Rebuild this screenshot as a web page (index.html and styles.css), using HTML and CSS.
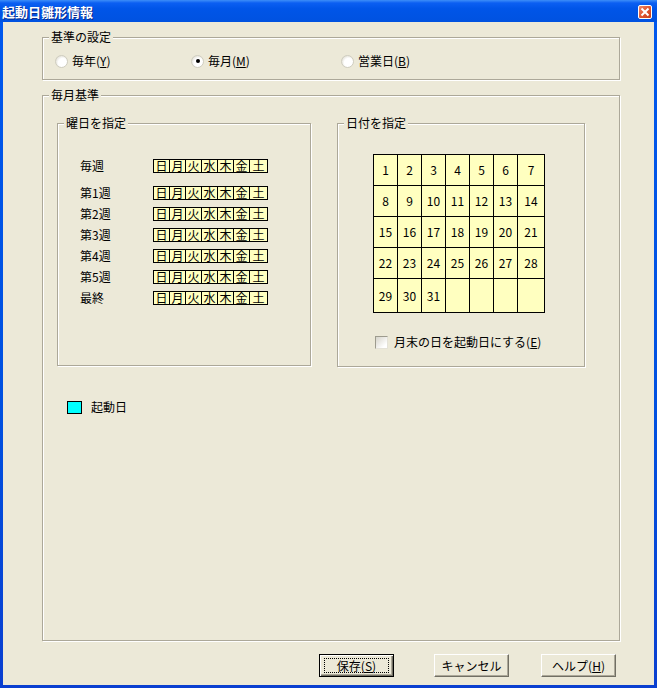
FILE: index.html
```html
<!DOCTYPE html>
<html lang='ja'>

<head>
    <meta charset='UTF-8'>
    <meta name='viewport' content='width=device-width, initial-scale=1.0'>
    <title>起動日雛形情報</title>
    <link rel="stylesheet" href="styles.css">
</head>

<body>
    <div class="window">
        <div class="titlebar">
            <span class="title">起動日雛形情報</span>
            <span class="close">
                <svg width="10" height="10" viewBox="0 0 10 10">
                    <path d="M1.5 1.5 L8.5 8.5 M8.5 1.5 L1.5 8.5" stroke="#fff" stroke-width="2" fill="none" />
                </svg>
            </span>
        </div>

        <div class="client">
            <!-- 基準の設定 -->
            <div class="group kijun">
                <span class="legend">基準の設定</span>
                <div class="radios">
                    <label class="radio r1"><span class="dot"></span><span>毎年(<u>Y</u>)</span></label>
                    <label class="radio r2"><span class="dot on"></span><span>毎月(<u>M</u>)</span></label>
                    <label class="radio"><span class="dot"></span><span>営業日(<u>B</u>)</span></label>
                </div>
            </div>

            <!-- 毎月基準 -->
            <div class="group maitsuki">
                <span class="legend">毎月基準</span>

                <div class="inner">
                    <div class="group youbi">
                        <span class="legend">曜日を指定</span>
                        <div class="week first">
                            <span class="wlabel">毎週</span>
                            <div class="days"><span>日</span><span>月</span><span>火</span><span>水</span><span>木</span><span>金</span><span>土</span></div>
                        </div>
                        <div class="week">
                            <span class="wlabel">第1週</span>
                            <div class="days"><span>日</span><span>月</span><span>火</span><span>水</span><span>木</span><span>金</span><span>土</span></div>
                        </div>
                        <div class="week">
                            <span class="wlabel">第2週</span>
                            <div class="days"><span>日</span><span>月</span><span>火</span><span>水</span><span>木</span><span>金</span><span>土</span></div>
                        </div>
                        <div class="week">
                            <span class="wlabel">第3週</span>
                            <div class="days"><span>日</span><span>月</span><span>火</span><span>水</span><span>木</span><span>金</span><span>土</span></div>
                        </div>
                        <div class="week">
                            <span class="wlabel">第4週</span>
                            <div class="days"><span>日</span><span>月</span><span>火</span><span>水</span><span>木</span><span>金</span><span>土</span></div>
                        </div>
                        <div class="week">
                            <span class="wlabel">第5週</span>
                            <div class="days"><span>日</span><span>月</span><span>火</span><span>水</span><span>木</span><span>金</span><span>土</span></div>
                        </div>
                        <div class="week">
                            <span class="wlabel">最終</span>
                            <div class="days"><span>日</span><span>月</span><span>火</span><span>水</span><span>木</span><span>金</span><span>土</span></div>
                        </div>
                    </div>

                    <div class="group hizuke">
                        <span class="legend">日付を指定</span>
                        <div class="cal">
                            <span>1</span><span>2</span><span>3</span><span>4</span><span>5</span><span>6</span><span>7</span>
                            <span>8</span><span>9</span><span>10</span><span>11</span><span>12</span><span>13</span><span>14</span>
                            <span>15</span><span>16</span><span>17</span><span>18</span><span>19</span><span>20</span><span>21</span>
                            <span>22</span><span>23</span><span>24</span><span>25</span><span>26</span><span>27</span><span>28</span>
                            <span>29</span><span>30</span><span>31</span><span></span><span></span><span></span><span></span>
                        </div>
                        <label class="check"><span class="box"></span><span>月末の日を起動日にする(<u>E</u>)</span></label>
                    </div>
                </div>

                <div class="hanrei">
                    <span class="cyan"></span>起動日
                </div>
            </div>

            <div class="buttons">
                <button class="btn default"><span class="focus">保存(<u>S</u>)</span></button>
                <button class="btn cancel">キャンセル</button>
                <button class="btn help"><span>ヘルプ(<u>H</u>)</span></button>
            </div>
        </div>
    </div>
</body>

</html>
```

FILE: styles.css
```css
html,
body {
    padding: 0;
    margin: 0;
}

body {
    font-family: "Noto Sans CJK JP", "Noto Sans", sans-serif;
    font-size: 12px;
    line-height: 14px;
    color: #000;
}

.window {
    width: 657px;
    height: 688px;
    box-sizing: border-box;
    display: flex;
    flex-direction: column;
    background: linear-gradient(#0058ee, #0050e0 60%, #0a3fd0);
}

/* タイトルバー */
.titlebar {
    height: 22px;
    display: flex;
    justify-content: space-between;
    align-items: center;
    padding: 1px 5px 0 2px;
    box-sizing: border-box;
    background: linear-gradient(#3d8ef8 0, #0b5ff2 3px, #0055e8 40%, #0052e0 100%);
}

.title {
    color: #fff;
    font-size: 13px;
    font-weight: bold;
    text-shadow: 1px 1px 0 #0a2a8a;
}

.close {
    width: 12px;
    height: 12px;
    border: 1px solid #fff;
    border-radius: 2px;
    background: linear-gradient(135deg, #f08a6a, #e0552f 50%, #c8401c);
    display: flex;
    justify-content: center;
    align-items: center;
}

.client {
    flex: 1;
    margin: 0 3px 3px;
    background: #ece9d8;
    padding: 15px 0 0 39px;
}

/* グループボックス */
.group {
    position: relative;
    box-sizing: border-box;
    border: 1px solid #aca899;
    box-shadow: inset 1px 1px 0 #fff, 1px 1px 0 #fff;
}

.legend {
    position: absolute;
    top: -8px;
    left: 6px;
    padding: 0 2px;
    background: #ece9d8;
    white-space: nowrap;
}

.kijun {
    width: 578px;
    height: 43px;
}

.radios {
    display: flex;
    align-items: center;
    margin-top: 16px;
    padding-left: 12px;
}

.radio {
    display: flex;
    align-items: center;
    gap: 4px;
}

.r1 {
    width: 136px;
}

.r2 {
    width: 150px;
}

.dot {
    width: 11px;
    height: 11px;
    border: 1px solid #cfcdc0;
    border-radius: 50%;
    background: radial-gradient(circle at 60% 60%, #fff 45%, #e2e0d6 80%, #b8b6aa 100%);
    display: flex;
    justify-content: center;
    align-items: center;
}

.dot.on::after {
    content: '';
    width: 4px;
    height: 4px;
    border-radius: 50%;
    background: #000;
}

.maitsuki {
    width: 578px;
    height: 546px;
    margin-top: 15px;
}

.inner {
    display: flex;
    gap: 26px;
    margin: 27px 0 0 14px;
}

.youbi {
    width: 254px;
    height: 243px;
    padding: 35px 0 0 22px;
}

.week {
    display: flex;
    align-items: center;
    margin-top: 7px;
}

.week.first {
    margin-top: 0;
    margin-bottom: 13px;
}

.wlabel {
    width: 73px;
}

.days {
    display: flex;
    border: 1px solid #000;
    background: #ffffc0;
}

.days span {
    width: 15px;
    height: 12px;
    line-height: 12px;
    text-align: center;
    border-left: 1px solid #000;
}

.days span:first-child {
    border-left: none;
}

.days span:last-child {
    width: 17px;
}

.hizuke {
    width: 248px;
    height: 244px;
    padding: 30px 0 0 35px;
}

.cal {
    display: grid;
    grid-template-columns: repeat(6, 24px) 27px;
    grid-template-rows: repeat(4, 31px) 34px;
    width: max-content;
    border-top: 1px solid #000;
    border-left: 1px solid #000;
    background: #ffffc0;
}

.cal span {
    border-right: 1px solid #000;
    border-bottom: 1px solid #000;
    display: flex;
    justify-content: center;
    align-items: center;
}

.check {
    display: flex;
    align-items: center;
    gap: 6px;
    margin: 22px 0 0 2px;
}

.box {
    width: 11px;
    height: 11px;
    border: 1px solid;
    border-color: #9d9b8e #e4e2d8 #e4e2d8 #9d9b8e;
    background: linear-gradient(135deg, #d6d4ca, #fff 80%);
}

/* 凡例 */
.hanrei {
    display: flex;
    align-items: center;
    gap: 9px;
    margin: 33px 0 0 24px;
}

.cyan {
    width: 13px;
    height: 11px;
    border: 1px solid #000;
    background: #00ffff;
}

/* ボタン */
.buttons {
    display: flex;
    margin-top: 13px;
    padding-left: 277px;
}

.btn {
    width: 75px;
    height: 23px;
    padding: 0;
    font: inherit;
    background: #ece9d8;
    border: 1px solid;
    border-color: #fff #716f64 #716f64 #fff;
    box-shadow: inset -1px -1px 0 #aca899;
    display: flex;
    justify-content: center;
    align-items: center;
}

.btn.default {
    border: 1px solid #000;
    box-shadow: inset 1px 1px 0 #fff, inset -1px -1px 0 #716f64, inset -2px -2px 0 #aca899;
}

.focus {
    width: 63px;
    height: 13px;
    line-height: 13px;
    border: 1px dotted #000;
    text-align: center;
}

.cancel {
    margin-left: 40px;
}

.help {
    margin-left: 32px;
}
```
